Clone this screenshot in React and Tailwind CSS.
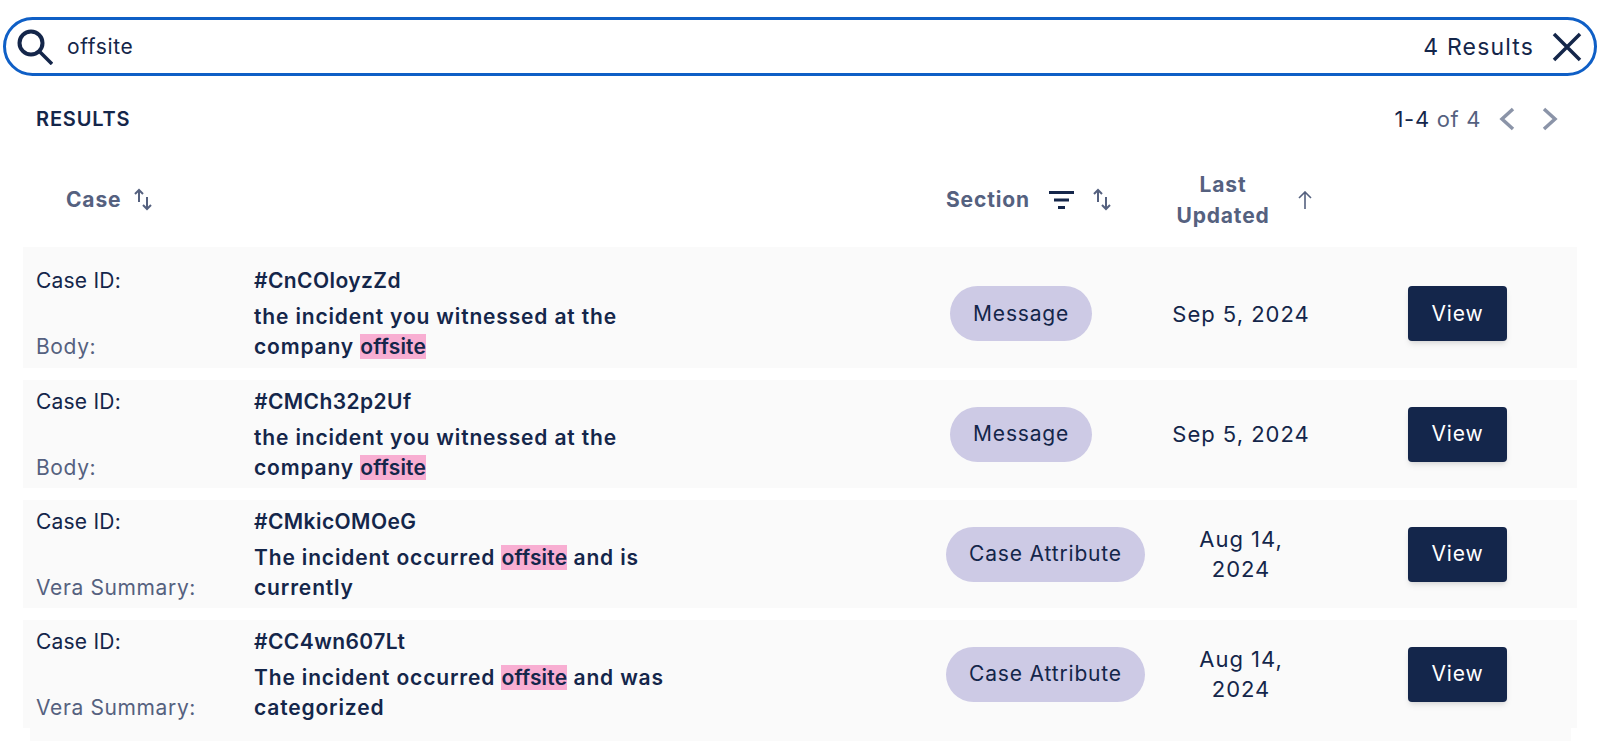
const ROWS = [
  { id: "#CnCOloyzZd", label: "Body:", before: "the incident you witnessed at the company ", tail: "", section: "Message", date: "Sep 5, 2024" },
  { id: "#CMCh32p2Uf", label: "Body:", before: "the incident you witnessed at the company ", tail: "", section: "Message", date: "Sep 5, 2024" },
  { id: "#CMkicOMOeG", label: "Vera Summary:", before: "The incident occurred ", tail: " and is currently", section: "Case Attribute", date: "Aug 14, 2024" },
  { id: "#CC4wn607Lt", label: "Vera Summary:", before: "The incident occurred ", tail: " and was categorized", section: "Case Attribute", date: "Aug 14, 2024" },
];

function SortIcon({ className }) {
  return (
    <svg viewBox="0 0 18 23" className={className} fill="none" stroke="currentColor" strokeWidth="2">
      <path d="M5 14V2M1 6l4-4 4 4" />
      <path d="M13 9v12M9 17l4 4 4-4" />
    </svg>
  );
}

function Row({ row, first }) {
  return (
    <div className={`flex items-start bg-[#fafafa] ${first ? "h-[121px] pt-3" : "h-[108px]"}`}>
      <div className="w-[231px] pl-[13px] pt-[7px] tracking-[0.03em] text-[#55617f]">
        <div className="h-[66px] tracking-[0.01em] text-[#14264a]">Case ID:</div>
        <div>{row.label}</div>
      </div>
      <div className="w-[692px] pt-[7px] font-semibold text-[#14264a]">
        <div className="mb-[6px] tracking-[0.02em]">{row.id}</div>
        <div className="w-[430px]">
          {row.before}
          <span className="bg-[#f8aed2] tracking-[0.01em]">offsite</span>
          {row.tail}
        </div>
      </div>
      <div className="flex h-full w-[224px] items-center">
        <span className={`flex h-[55px] items-center rounded-full bg-[#cdcae5] px-[23px] text-[#14264a] ${row.section === "Message" ? "ml-1" : ""}`}>
          {row.section}
        </span>
      </div>
      <div className="flex h-full w-[142px] items-center text-center text-[22px] tracking-[0.045em] text-[#14264a]">
        <span className="w-full">{row.date}</span>
      </div>
      <div className="ml-[96px] flex h-full items-center">
        <button className="h-[55px] w-[99px] rounded bg-[#14264b] text-white shadow-md">View</button>
      </div>
    </div>
  );
}

export default function App() {
  return (
    <div className="h-[748px] overflow-hidden bg-white pt-[17px] font-['Inter',sans-serif] text-[21px] leading-[30px] tracking-[0.04em]">
      <div className="mx-[3px] flex h-[59px] items-center rounded-[30px] border-[3px] border-[#0f5fc6] pl-[11px] pr-3 text-[#14264a]">
        <svg viewBox="0 0 36 36" className="h-9 w-9" fill="none" stroke="currentColor">
          <circle cx="14" cy="14" r="11.5" strokeWidth="4" />
          <path d="M22 22l13 13" strokeWidth="3.5" />
        </svg>
        <span className="ml-[14px] flex-1 tracking-[0.03em]">offsite</span>
        <span className="text-[23px] tracking-[0.05em]">4 Results</span>
        <svg viewBox="0 0 30 30" className="ml-[18px] h-[30px] w-[30px]" fill="none" stroke="currentColor" strokeWidth="3.5">
          <path d="M2 2l26 26M28 2L2 28" />
        </svg>
      </div>

      <div className="mt-[28px] flex h-[30px] items-center pl-9 pr-[42px]">
        <h2 className="flex-1 text-[20px] font-semibold text-[#14264a]">RESULTS</h2>
        <span className="text-[22px] tracking-[0.03em] text-[#14264a]">1-4 <span className="text-[#55617f]">of 4</span></span>
        <svg viewBox="0 0 16 24" className="ml-[18px] h-6 w-4 text-[#8b94a8]" fill="none" stroke="currentColor" strokeWidth="3.5">
          <path d="M14 2L3 12l11 10" />
        </svg>
        <svg viewBox="0 0 16 24" className="ml-[27px] h-6 w-4 text-[#8b94a8]" fill="none" stroke="currentColor" strokeWidth="3.5">
          <path d="M2 2l11 10L2 22" />
        </svg>
      </div>

      <div className="mx-[23px] mt-[18px] flex h-[95px] items-center font-bold text-[#55617f]">
        <div className="flex w-[923px] items-center pl-[43px]">
          <span>Case</span>
          <SortIcon className="ml-[13px] h-[23px] w-[18px]" />
        </div>
        <div className="flex w-[229px] items-center">
          <span>Section</span>
          <svg viewBox="0 0 25 18" className="ml-[19px] h-[18px] w-[25px] text-[#14264a]" fill="currentColor">
            <path d="M0 0h25v3H0zM5 7.5h15v3H5zM9 15h7v3H9z" />
          </svg>
          <SortIcon className="ml-[19px] h-[23px] w-[18px]" />
        </div>
        <div className="w-[96px] text-center leading-[31px]">Last Updated</div>
        <svg viewBox="0 0 14 18" className="ml-[27px] h-[18px] w-[14px]" fill="none" stroke="currentColor" strokeWidth="1.6">
          <path d="M7 18V1M1 7l6-6 6 6" />
        </svg>
      </div>

      <div className="mx-[23px] flex flex-col gap-3">
        {ROWS.map((row, i) => (
          <Row key={row.id} row={row} first={i === 0} />
        ))}
      </div>
      <div className="ml-[30px] mr-[29px] h-[13px] bg-[#fafafa]" />
    </div>
  );
}
